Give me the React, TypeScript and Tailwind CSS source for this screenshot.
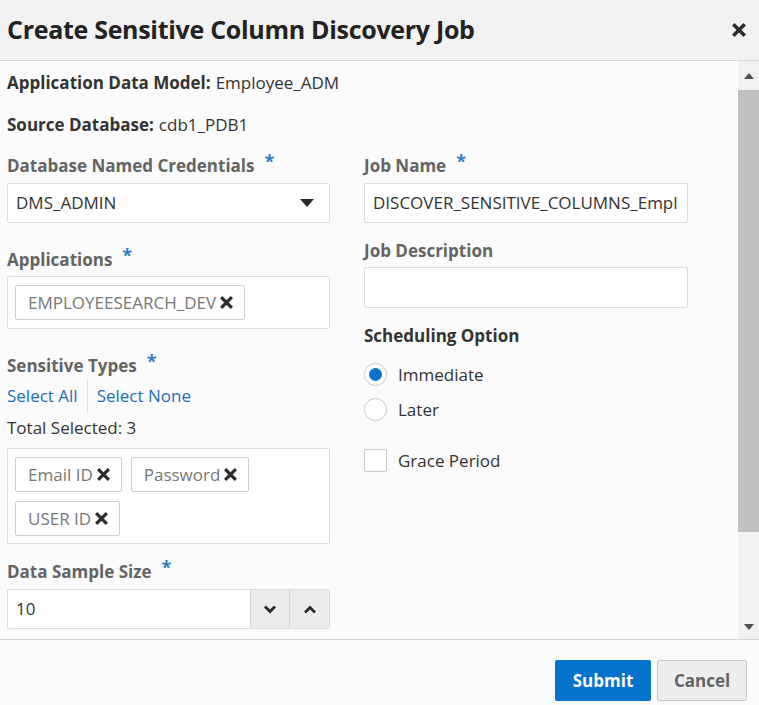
import React from "react";

const font = { fontFamily: '"Open Sans", "Noto Sans", Arial, sans-serif' };

const Req = () => <span className="ml-[10px] text-[18px] leading-none text-[#2f7bbf] relative -top-[5px]">*</span>;

const Label = ({ text, req, dark }: { text: string; req?: boolean; dark?: boolean }) => (
  <div className={`h-6 flex items-center text-[17px] font-bold ${dark ? "text-[#333]" : "text-[#646464]"}`}>
    {text}
    {req && <Req />}
  </div>
);

const BoldX = ({ size = 14 }: { size?: number }) => (
  <svg width={size} height={size} viewBox="0 0 14 14">
    <path d="M2 2 L12 12 M12 2 L2 12" stroke="#2b2b2b" strokeWidth="3" strokeLinecap="butt" />
  </svg>
);

const Chip = ({ text }: { text: string }) => (
  <div className="h-[35px] pl-3 pr-[10px] flex items-center gap-[3px] border border-[#cfcfcf] rounded-[2px] bg-white text-[17px] text-[#777]">
    <span>{text}</span>
    <BoldX size={15} />
  </div>
);

const Chevron = ({ up }: { up?: boolean }) => (
  <svg width="14" height="9" viewBox="0 0 14 9">
    <path d={up ? "M2 7.5 L7 2.5 L12 7.5" : "M2 1.5 L7 6.5 L12 1.5"} fill="none" stroke="#2b2b2b" strokeWidth="2.8" />
  </svg>
);

const App = () => {
  return (
    <div className="w-[759px] h-[705px] flex flex-col bg-[#fbfbfb] text-[#333] overflow-hidden" style={font}>
      {/* header */}
      <div className="h-[61px] shrink-0 bg-[#f2f2f2] border-b border-[#d4d4d4] flex items-center justify-between pl-[7px] pr-[12px]">
        <h1 className="text-[25px] font-bold text-[#222] tracking-[-0.3px]">Create Sensitive Column Discovery Job</h1>
        <BoldX size={16} />
      </div>

      {/* body */}
      <div className="flex-1 flex min-h-0">
        <div className="flex-1 pl-[7px] pt-[10px]">
          <div className="h-6 flex items-center text-[17px]">
            <span className="font-bold">Application Data Model:</span>
            <span className="ml-[5px]">Employee_ADM</span>
          </div>
          <div className="h-6 mt-[18px] flex items-center text-[17px]">
            <span className="font-bold">Source Database:</span>
            <span className="ml-[5px]">cdb1_PDB1</span>
          </div>

          <div className="mt-[17px] flex gap-[34px]">
            {/* left column */}
            <div className="w-[323px] flex flex-col">
              <Label text="Database Named Credentials" req />
              <div className="mt-[5px] h-10 border border-[#dcdcdc] rounded-[2px] bg-white flex items-center justify-between pl-2 pr-[15px] text-[17px]">
                <span>DMS_ADMIN</span>
                <svg width="14" height="8" viewBox="0 0 14 8">
                  <path d="M0 0 H14 L7 8 Z" fill="#2b2b2b" />
                </svg>
              </div>

              <div className="mt-[25px]">
                <Label text="Applications" req />
              </div>
              <div className="mt-[4px] border border-[#dcdcdc] rounded-[2px] bg-white px-[7px] pt-[8px] pb-[8px] flex">
                <Chip text="EMPLOYEESEARCH_DEV" />
              </div>

              <div className="mt-[25px]">
                <Label text="Sensitive Types" req />
              </div>
              <div className="mt-[2px] flex items-center text-[17px] text-[#1a6fb5]">
                <span className="pr-[9px]">Select All</span>
                <span className="w-px h-8 bg-[#dedede]" />
                <span className="pl-[9px]">Select None</span>
              </div>
              <div className="mt-[4px] h-6 flex items-center text-[17px]">Total Selected: 3</div>
              <div className="mt-[8px] border border-[#dcdcdc] rounded-[2px] bg-white px-[7px] pt-[8px] pb-[7px] flex flex-wrap gap-x-[9px] gap-y-[9px]">
                <Chip text="Email ID" />
                <Chip text="Password" />
                <Chip text="USER ID" />
              </div>

              <div className="mt-[16px]">
                <Label text="Data Sample Size" req />
              </div>
              <div className="mt-[5px] h-10 border border-[#dcdcdc] rounded-[2px] bg-white flex text-[17px]">
                <div className="flex-1 flex items-center pl-2">10</div>
                <div className="w-[39px] bg-[#ececec] border-l border-[#d6d6d6] flex items-center justify-center">
                  <Chevron />
                </div>
                <div className="w-[40px] bg-[#ececec] border-l border-[#d6d6d6] flex items-center justify-center">
                  <Chevron up />
                </div>
              </div>
            </div>

            {/* right column */}
            <div className="w-[324px] flex flex-col">
              <Label text="Job Name" req />
              <div className="mt-[5px] h-10 border border-[#dcdcdc] rounded-[2px] bg-white flex items-center pl-2 text-[17px] overflow-hidden whitespace-nowrap">
                DISCOVER_SENSITIVE_COLUMNS_Empl
              </div>
              <div className="mt-[16px]">
                <Label text="Job Description" />
              </div>
              <div className="mt-[4px] h-[41px] border border-[#dcdcdc] rounded-[2px] bg-white" />
              <div className="mt-[16px]">
                <Label text="Scheduling Option" dark />
              </div>
              <div className="mt-[15px] flex items-center gap-[11px] text-[17px] leading-[23px]">
                <span className="w-[23px] h-[23px] rounded-full border border-[#c9c9c9] bg-white flex items-center justify-center">
                  <span className="w-[13px] h-[13px] rounded-full bg-[#0a72c7]" />
                </span>
                Immediate
              </div>
              <div className="mt-[12px] flex items-center gap-[11px] text-[17px] leading-[23px]">
                <span className="w-[23px] h-[23px] rounded-full border border-[#c9c9c9] bg-white" />
                Later
              </div>
              <div className="mt-[28px] flex items-center gap-[11px] text-[17px] leading-[23px]">
                <span className="w-[23px] h-[23px] rounded-[2px] border border-[#c9c9c9] bg-white" />
                Grace Period
              </div>
            </div>
          </div>
        </div>

        {/* scrollbar */}
        <div className="w-[21px] shrink-0 bg-[#f1f1f1] flex flex-col items-center">
          <div className="h-[29px] flex items-center justify-center">
            <svg width="10" height="6" viewBox="0 0 10 6">
              <path d="M0 6 L5 0 L10 6 Z" fill="#505050" />
            </svg>
          </div>
          <div className="w-full h-[442px] bg-[#c1c1c1]" />
          <div className="flex-1" />
          <div className="h-[25px] flex items-center justify-center">
            <svg width="10" height="6" viewBox="0 0 10 6">
              <path d="M0 0 L10 0 L5 6 Z" fill="#505050" />
            </svg>
          </div>
        </div>
      </div>

      {/* footer */}
      <div className="h-[66px] shrink-0 border-t border-[#d4d4d4] flex items-start justify-end gap-[6px] pt-[20px] pr-[12px]">
        <button className="w-[96px] h-[41px] rounded-[2px] bg-[#0572ce] text-white text-[17px] font-bold">Submit</button>
        <button className="w-[90px] h-[41px] rounded-[2px] bg-[#eeeeee] border border-[#c6c6c6] text-[#646464] text-[17px] font-bold">Cancel</button>
      </div>
    </div>
  );
};

export default App;
